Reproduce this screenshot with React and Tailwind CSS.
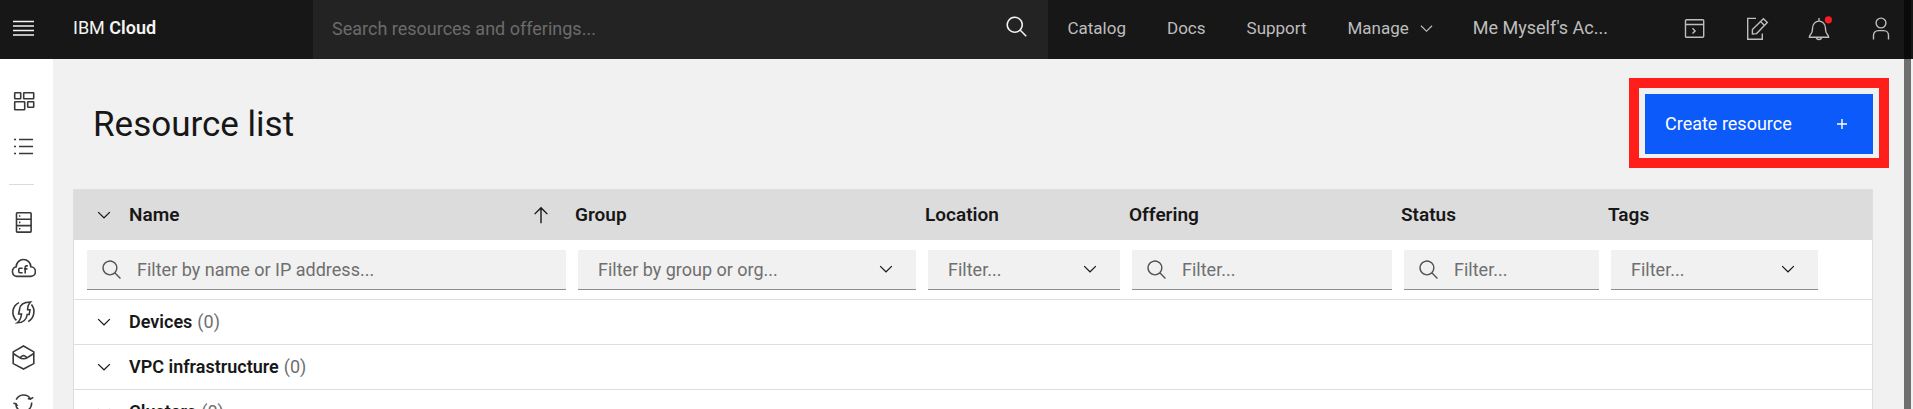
const strokeProps = { fill: "none", stroke: "currentColor", strokeWidth: 1.4 };

function SearchIcon({ className }) {
  return (
    <svg viewBox="0 0 32 32" className={className} fill="currentColor" aria-hidden="true">
      <path d="M29,27.5859l-7.5521-7.5521a11.0177,11.0177,0,1,0-1.4141,1.4141L27.5859,29ZM4,13a9,9,0,1,1,9,9A9.01,9.01,0,0,1,4,13Z" />
    </svg>
  );
}

function Chevron({ className }) {
  return (
    <svg viewBox="0 0 16 16" className={className} fill="currentColor" aria-hidden="true">
      <path d="M8 11L3 6 3.7 5.3 8 9.6 12.3 5.3 13 6z" />
    </svg>
  );
}

function ArrowUp({ className }) {
  return (
    <svg viewBox="0 0 32 32" className={className} fill="currentColor" aria-hidden="true">
      <path d="M16 4 6 14 7.41 15.41 15 7.83 15 28 17 28 17 7.83 24.59 15.41 26 14 16 4z" />
    </svg>
  );
}

function RailIcon({ children }) {
  return (
    <svg viewBox="0 0 25 25" className="size-[25px]" aria-hidden="true" fill="none" stroke="currentColor" strokeWidth="1.6">
      {children}
    </svg>
  );
}

const railTop = [
  {
    label: "Dashboard",
    icon: (
      <RailIcon>
        <rect x="3.7" y="3.7" width="6" height="6" rx="0.5" />
        <rect x="12.7" y="3.7" width="10" height="6" rx="0.5" />
        <rect x="3.7" y="12.7" width="10" height="8" rx="0.5" />
        <rect x="16.7" y="12.7" width="6" height="5.6" rx="0.5" />
      </RailIcon>
    ),
  },
  {
    label: "Resource list",
    icon: (
      <RailIcon>
        <path d="M3 5.5h2M8 5.5h14M3 12.5h2M8 12.5h14M3 19.5h2M8 19.5h14" strokeWidth="1.4" />
      </RailIcon>
    ),
  },
];

const railBottom = [
  {
    label: "Classic infrastructure",
    icon: (
      <RailIcon>
        <rect x="5.5" y="2.7" width="14.6" height="19.4" rx="0.8" />
        <path d="M5.5 9.2h14.6M5.5 15.6h14.6" />
        <path d="M8 6h1.4M8 12.4h1.4M8 18.8h1.4" />
      </RailIcon>
    ),
  },
  {
    label: "Cloud Foundry",
    icon: (
      <RailIcon>
        <path d="M5.600 21.400h13.800a4.700 4.700 0 0 0 .4-9.600 7.200 7.200 0 0 0-14.600 0 4.900 4.900 0 0 0 .4 9.600z" />
        <path d="M11.600 13.200H8.800a1 1 0 0 0-1 1v2.600a1 1 0 0 0 1 1h2.800M14.200 18.400v-6.300a1.200 1.200 0 0 1 1.200-1.200h1.400M12.900 13.900h3.600" />
      </RailIcon>
    ),
  },
  {
    label: "Functions",
    icon: (
      <RailIcon>
        <path d="M8 2.600C1.600 5.600-.6 14.600 5.400 20.400" />
        <path d="M20.400 4.600c4.600 5.400 2.600 13.600-3.200 17" />
        <path d="M19.600 2C13 2 9 4 8.600 9.500L7.600 14h2.900c-.5 4-1.500 7-4.300 8.800 5.800 0 9.300-2.800 10-8.300h2l.8-4.700h-2.400c0-2.800.8-5.800 3-7.800z" />
      </RailIcon>
    ),
  },
  {
    label: "VMware",
    icon: (
      <RailIcon>
        <path d="M12.500 1 22.800 6.900v11.700L12.500 24 2.200 18.600V6.900z" />
        <path d="M2.200 8.500 8.600 12.600c1.900 1.500 5.900 1.500 7.800 0l6.400-4.100M9 12.600l2.300-1.700c.8-.4 1.600-.4 2.400 0l2.300 1.700" />
      </RailIcon>
    ),
  },
  {
    label: "Integrate",
    icon: (
      <RailIcon>
        <path d="M5.200 9.600A8.200 8.200 0 0 1 19.400 8.600M22.200 7.400l-2.800 1.800-2.600-.8M20.600 12.500a8.200 8.200 0 0 1-3.600 7.600M2.400 13.200l2.600.6 1.400 2.400M4.800 14a8.200 8.200 0 0 0 3.800 6.500" />
      </RailIcon>
    ),
  },
];

function HeaderIcon({ children }) {
  return (
    <svg viewBox="0 0 26 26" className="size-[26px]" aria-hidden="true" {...strokeProps}>
      {children}
    </svg>
  );
}

const headerActions = [
  {
    label: "Cloud Shell",
    icon: (
      <HeaderIcon>
        <rect x="3.500" y="4.700" width="18.200" height="17.600" rx="1" />
        <path d="M3.500 9.500h18.200M10.500 13.200l2.600 2.700-2.600 2.700" />
      </HeaderIcon>
    ),
  },
  {
    label: "Feedback",
    icon: (
      <HeaderIcon>
        <path d="M12 3.400H3.700v20.800h14.600V18.600" />
        <path d="M8.400 19v-4.400L19.400 3.700l3.900 3.900L12.600 18.600zM16.600 6.500l3.900 3.900" />
      </HeaderIcon>
    ),
  },
  {
    label: "Notifications",
    icon: (
      <HeaderIcon>
        <path d="M13 3v3M3.400 22.300c0-3.600 3.200-1.800 3.200-9.300a6.400 6.900 0 0 1 12.800 0c0 7.500 3.200 5.700 3.200 9.300zM10.300 22.500c.4 2.600 5 2.600 5.400 0" />
        <circle cx="22.400" cy="4.800" r="3.600" className="fill-[#fa1b24] stroke-none" />
      </HeaderIcon>
    ),
  },
  {
    label: "Profile",
    icon: (
      <HeaderIcon>
        <circle cx="13" cy="8" r="4.900" />
        <path d="M5.500 24.500v-4.300a4.600 4.600 0 0 1 4.600-4.600h5.800a4.600 4.600 0 0 1 4.600 4.600v4.300" />
      </HeaderIcon>
    ),
  },
];

const columns = [
  { name: "Group", type: "select", placeholder: "Filter by group or org..." },
  { name: "Location", type: "select", placeholder: "Filter..." },
  { name: "Offering", type: "text", placeholder: "Filter..." },
  { name: "Status", type: "text", placeholder: "Filter..." },
  { name: "Tags", type: "select", placeholder: "Filter..." },
];

const groups = [
  { name: "Devices", count: 0 },
  { name: "VPC infrastructure", count: 0 },
  { name: "Clusters", count: 0 },
];

function TextFilter({ label, placeholder }) {
  return (
    <label className="relative block">
      <SearchIcon className="pointer-events-none absolute top-[9px] left-[14px] size-[22px] text-[#525252]" />
      <input
        type="text"
        aria-label={label}
        placeholder={placeholder}
        className="block h-10 w-full border-b border-[#8d8d8d] bg-[#f1f1f1] pl-[50px] placeholder:text-[#6f6f6f]"
      />
    </label>
  );
}

function SelectFilter({ label, placeholder }) {
  return (
    <label className="relative block">
      <select
        aria-label={label}
        className="block h-10 w-full appearance-none border-b border-[#8d8d8d] bg-[#f1f1f1] pr-12 pl-5 text-[#6f6f6f]"
      >
        <option>{placeholder}</option>
      </select>
      <Chevron className="pointer-events-none absolute top-[9px] right-5 size-5" />
    </label>
  );
}

function RailList({ items }) {
  return (
    <ul>
      {items.map((item) => (
        <li key={item.label}>
          <a href="#" aria-label={item.label} className="flex h-[45px] items-center pl-[11px]">
            {item.icon}
          </a>
        </li>
      ))}
    </ul>
  );
}

function Header() {
  return (
    <header className="flex h-[59px] shrink-0 bg-[#171717] text-[17px] text-[#bebebe]">
      <div className="flex w-[313px] shrink-0 items-center pb-[3px] text-lg text-[#f4f4f4]">
        <button type="button" aria-label="Menu" className="w-[73px] pl-[13px]">
          <svg viewBox="0 0 21 16" className="h-4 w-[21px]" fill="none" stroke="currentColor" aria-hidden="true">
            <path d="M0 1.500h21M0 6h21M0 10.500h21M0 15h21" strokeWidth="1.300" />
          </svg>
        </button>
        <a href="#">
          IBM <span className="font-semibold">Cloud</span>
        </a>
      </div>
      <label className="relative flex-1">
        <input
          type="search"
          aria-label="Search resources and offerings"
          placeholder="Search resources and offerings..."
          className="h-full w-full bg-[#232323] pr-16 pb-[3px] pl-[19px] text-lg placeholder:text-[#6b6b6b]"
        />
        <SearchIcon className="pointer-events-none absolute top-[15px] right-[19px] size-6 text-[#f4f4f4]" />
      </label>
      <nav className="flex items-center gap-[41px] pr-14 pb-[3px] pl-5">
        <a href="#">Catalog</a>
        <a href="#">Docs</a>
        <a href="#">Support</a>
        <button type="button" className="flex items-center gap-2">
          Manage
          <Chevron className="size-[19px]" />
        </button>
        <button type="button" className="-ml-1 text-lg">
          Me Myself&apos;s Ac...
        </button>
      </nav>
      <div className="flex pr-px pb-1">
        {headerActions.map((action) => (
          <button key={action.label} type="button" aria-label={action.label} className="flex w-[62px] items-center justify-center">
            {action.icon}
          </button>
        ))}
      </div>
    </header>
  );
}

function ResourceTable() {
  return (
    <div className="border border-[#dcdfe1] bg-white">
      <table className="w-full table-fixed border-separate border-spacing-0 text-left">
        <colgroup>
          <col className="w-[498px]" />
          <col className="w-[350px]" />
          <col className="w-[204px]" />
          <col className="w-[272px]" />
          <col className="w-[207px]" />
          <col className="w-[219px]" />
          <col className="w-[48px]" />
        </colgroup>
        <thead>
          <tr className="h-[50px] bg-[#dcdcdc] text-[19px]">
            <th className="p-0">
              <div className="flex items-center pr-5 pl-5">
                <button type="button" aria-label="Expand all" className="mr-[15px]">
                  <Chevron className="block size-5" />
                </button>
                <button type="button" className="flex flex-1 items-center justify-between font-semibold">
                  Name
                  <ArrowUp className="size-[22px]" />
                </button>
              </div>
            </th>
            {columns.map((column) => (
              <th key={column.name} className="p-0 pl-[3px] font-semibold">
                {column.name}
              </th>
            ))}
            <td />
          </tr>
        </thead>
        <tbody>
          <tr>
            <td className="border-b border-[#dcdfe1] pt-[10px] pr-[6px] pb-[9px] pl-[13px]">
              <TextFilter label="Name" placeholder="Filter by name or IP address..." />
            </td>
            {columns.map((column) => (
              <td key={column.name} className="border-b border-[#dcdfe1] px-[6px] pt-[10px] pb-[9px]">
                {column.type === "select" ? (
                  <SelectFilter label={column.name} placeholder={column.placeholder} />
                ) : (
                  <TextFilter label={column.name} placeholder={column.placeholder} />
                )}
              </td>
            ))}
            <td className="border-b border-[#dcdfe1]" />
          </tr>
          {groups.map((group) => (
            <tr key={group.name} className="h-[45px]">
              <td colSpan={7} className="border-b border-[#dcdfe1] p-0">
                <button type="button" className="flex items-center pl-5">
                  <Chevron className="mr-[15px] size-5" />
                  <span className="mr-[5px] font-semibold">{group.name}</span>
                  <span className="text-[#6f6f6f]">({group.count})</span>
                </button>
              </td>
            </tr>
          ))}
        </tbody>
      </table>
    </div>
  );
}

export default function App() {
  return (
    <div className="relative flex h-screen flex-col overflow-hidden bg-[#f1f1f1] font-['Roboto','Liberation_Sans',sans-serif] text-lg leading-6 text-[#171717]">
      <Header />
      <div className="flex min-h-0 flex-1">
        <nav aria-label="Main" className="w-[53px] shrink-0 overflow-hidden bg-white pt-5 text-[#393939]">
          <RailList items={railTop} />
          <hr className="my-[15px] mr-[19px] ml-[9px] border-[#dcdcdc]" />
          <RailList items={railBottom} />
        </nav>
        <main className="min-w-0 flex-1 overflow-hidden pr-10 pl-5">
          <div className="mt-[19px] mb-[21px] -mr-4 flex items-center justify-between pl-5">
            <h1 className="pt-1 text-[35px] leading-10">Resource list</h1>
            <div className="border-10 border-[#ff1e19] px-[6px] pt-[6px] pb-1">
              <button type="button" className="flex h-[60px] w-[228px] items-center justify-between bg-[#0c5afa] pr-[21px] pl-5 text-white">
                Create resource
                <svg viewBox="0 0 20 20" className="size-5" aria-hidden="true" {...strokeProps}>
                  <path d="M10 5v10M5 10h10" />
                </svg>
              </button>
            </div>
          </div>
          <ResourceTable />
        </main>
      </div>
      <div className="pointer-events-none absolute inset-y-0 right-[2px] w-[7px] bg-black/54" />
    </div>
  );
}
